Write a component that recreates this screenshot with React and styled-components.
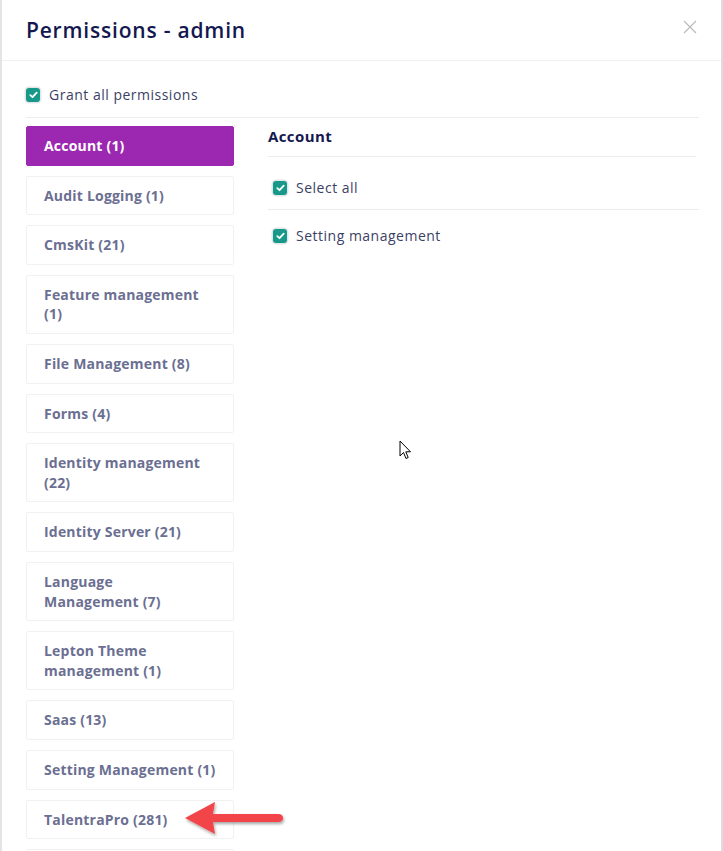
import React from "react";
import styled, { createGlobalStyle } from "styled-components";

const GlobalStyle = createGlobalStyle`
  html, body { margin: 0; padding: 0; background: #fff; }
  body { font-family: "Open Sans", "Noto Sans", sans-serif; }
  * { box-sizing: border-box; }
`;

const Modal = styled.div`
  position: relative;
  width: 723px;
  height: 851px;
  overflow: hidden;
  background: #fff;
  border-left: 2px solid #e4e4e4;
  border-right: 2px solid #dcdcdc;
`;

const Header = styled.div`
  height: 61px;
  display: flex;
  align-items: center;
  justify-content: space-between;
  padding: 0 24px 0 24px;
  border-bottom: 1px solid #f1f1f3;
`;

const Title = styled.h2`
  margin: 0 0 1px 0;
  font-size: 21px;
  font-weight: 600;
  color: #141850;
  letter-spacing: 0.8px;
`;

const Close = styled.button`
  border: 0;
  background: none;
  padding: 0;
  width: 14px;
  height: 14px;
  margin-top: -6px;
  display: flex;
  cursor: pointer;
`;

const Body = styled.div`
  padding: 23px 22px 0 24px;
`;

const CheckRow = styled.label`
  display: flex;
  align-items: center;
  gap: 9px;
  font-size: 14px;
  line-height: 21px;
  letter-spacing: 0.5px;
  color: #3b3f66;
  height: 21px;
`;

const Box = styled.span`
  width: 14px;
  height: 14px;
  border-radius: 3px;
  background: #17998a;
  box-shadow: 0 0 0 1.5px #e3e6e8;
  display: inline-flex;
  align-items: center;
  justify-content: center;
  flex: none;
`;

const Rule = styled.div`
  height: 1px;
  background: #ececf0;
  margin: ${(p) => p.$m || "0"};
`;

const Columns = styled.div`
  display: grid;
  grid-template-columns: 208px 1fr;
  column-gap: 34px;
  margin-top: 8px;
`;

const Nav = styled.div`
  display: flex;
  flex-direction: column;
  gap: 10px;
`;

const NavItem = styled.div`
  padding: 9px 17px;
  border: 1px solid ${(p) => (p.$active ? "#9c27b0" : "#f1f1f3")};
  border-radius: 2px;
  background: ${(p) => (p.$active ? "#9c27b0" : "#fff")};
  color: ${(p) => (p.$active ? "#fff" : "#6b6f92")};
  font-weight: 700;
  font-size: 14px;
  line-height: 19.6px;
  letter-spacing: 0.2px;
  white-space: nowrap;
`;

const Panel = styled.div`
  display: flex;
  flex-direction: column;
`;

const PanelTitle = styled.div`
  font-size: 15px;
  font-weight: 700;
  color: #141850;
  letter-spacing: 0.4px;
  line-height: 20px;
  padding: 0 0 10px 0;
  border-bottom: 1px solid #ececf0;
  margin-right: 3px;
`;

const PanelRow = styled.div`
  padding: ${(p) => p.$pad || "20px 3px 11px 5px"};
  display: flex;
  align-items: center;
  border-bottom: ${(p) => (p.$last ? "none" : "1px solid #ececf0")};
`;

const Arrow = styled.svg`
  position: absolute;
  left: 178px;
  top: 796px;
`;

const Cursor = styled.svg`
  position: absolute;
  left: 397px;
  top: 440px;
`;

const Check = () => (
  <Box>
    <svg width="9" height="8" viewBox="0 0 9 8">
      <path d="M1.3 4.2 L3.5 6.2 L7.7 1.6" fill="none" stroke="#fff" strokeWidth="1.8" strokeLinecap="round" strokeLinejoin="round" />
    </svg>
  </Box>
);

const items = [
  { lines: ["Account (1)"], active: true },
  { lines: ["Audit Logging (1)"] },
  { lines: ["CmsKit (21)"] },
  { lines: ["Feature management", "(1)"] },
  { lines: ["File Management (8)"] },
  { lines: ["Forms (4)"] },
  { lines: ["Identity management", "(22)"] },
  { lines: ["Identity Server (21)"] },
  { lines: ["Language", "Management (7)"] },
  { lines: ["Lepton Theme", "management (1)"] },
  { lines: ["Saas (13)"] },
  { lines: ["Setting Management (1)"] },
  { lines: ["TalentraPro (281)"] },
  { lines: ["Text Template", "Management (3)"] },
];

export default function App() {
  return (
    <>
      <GlobalStyle />
      <Modal>
        <Header>
          <Title>Permissions - admin</Title>
          <Close aria-label="close">
            <svg width="14" height="14" viewBox="0 0 14 14">
              <path d="M1 1 L13 13 M13 1 L1 13" stroke="#b9b9b9" strokeWidth="1.1" />
            </svg>
          </Close>
        </Header>
        <Body>
          <CheckRow>
            <Check />
            Grant all permissions
          </CheckRow>
          <Rule $m="12px 0 0 0" />
          <Columns>
            <Nav>
              {items.map((it) => (
                <NavItem key={it.lines.join(" ")} $active={it.active}>
                  {it.lines.map((l, i) => (
                    <React.Fragment key={l}>
                      {i > 0 && <br />}
                      {l}
                    </React.Fragment>
                  ))}
                </NavItem>
              ))}
            </Nav>
            <Panel>
              <PanelTitle>Account</PanelTitle>
              <PanelRow>
                <CheckRow>
                  <Check />
                  Select all
                </CheckRow>
              </PanelRow>
              <PanelRow $pad="15px 3px 11px 5px" $last>
                <CheckRow>
                  <Check />
                  Setting management
                </CheckRow>
              </PanelRow>
            </Panel>
          </Columns>
        </Body>
        <Arrow width="110" height="44" viewBox="0 0 110 44">
          <defs>
            <filter id="sh" x="-20%" y="-30%" width="140%" height="170%">
              <feDropShadow dx="1" dy="2" stdDeviation="1.5" floodColor="#000" floodOpacity="0.35" />
            </filter>
          </defs>
          <g filter="url(#sh)">
            <path d="M5 22 L35 6 L33 18 L98 18 Q103 18 103 22 Q103 26 98 26 L33 26 L35 38 Z" fill="#f2444a" />
          </g>
        </Arrow>
        <Cursor width="14" height="22" viewBox="0 0 14 22">
          <path d="M1 1 L1 16 L4.5 12.5 L7 18.5 L9.2 17.5 L6.8 11.8 L11.5 11.8 Z" fill="#fff" stroke="#000" strokeWidth="1" strokeLinejoin="miter" />
        </Cursor>
      </Modal>
    </>
  );
}
